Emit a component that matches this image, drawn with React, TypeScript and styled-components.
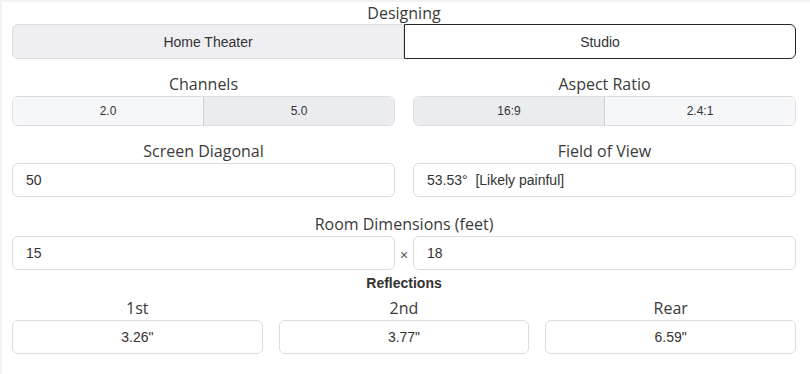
import React from "react";
import styled, { createGlobalStyle } from "styled-components";

const Global = createGlobalStyle`
  html, body { margin: 0; padding: 0; background: #fff; }
  * { box-sizing: border-box; }
`;

const Page = styled.div`
  width: 810px;
  height: 374px;
  padding: 0 14px 0 10px;
  font-family: "Open Sans", "Noto Sans", sans-serif;
  color: #333;
  border-top: 2px solid #f3f3f3;
  border-left: 2px solid #f3f3f3;
`;

const Label = styled.div<{ $mt?: number; $h?: number }>`
  text-align: center;
  font-size: 16px;
  line-height: ${(p) => p.$h ?? 24}px;
  height: ${(p) => p.$h ?? 24}px;
  margin-top: ${(p) => p.$mt ?? 0}px;
  color: #3a3a3a;
  white-space: nowrap;
`;

const Bold = styled.div`
  text-align: center;
  font-family: "Liberation Sans", Arial, sans-serif;
  font-weight: bold;
  font-size: 14px;
  line-height: 16px;
  margin-top: 5px;
  color: #333;
`;

const Segmented = styled.div<{ $h: number }>`
  display: flex;
  height: ${(p) => p.$h}px;
`;

const ModeBtn = styled.div<{ $active?: boolean; $side: "l" | "r" }>`
  flex: 1;
  display: flex;
  align-items: center;
  justify-content: center;
  font-family: "Liberation Sans", Arial, sans-serif;
  font-size: 14px;
  color: #333;
  background: ${(p) => (p.$active ? "#fff" : "#efeff3")};
  border: 1px solid ${(p) => (p.$active ? "#262626" : "#d9d9de")};
  border-radius: ${(p) => (p.$side === "l" ? "6px 0 0 6px" : "0 6px 6px 0")};
`;

const Two = styled.div`
  display: grid;
  grid-template-columns: 1fr 1fr;
  column-gap: 18px;
`;

const Col = styled.div`
  display: flex;
  flex-direction: column;
`;

const Toggle = styled.div`
  display: flex;
  height: 30px;
  border: 1px solid #dcdde1;
  border-radius: 6px;
  overflow: hidden;
`;

const Seg = styled.div<{ $sel?: boolean }>`
  flex: 1;
  display: flex;
  align-items: center;
  justify-content: center;
  font-family: "Liberation Sans", Arial, sans-serif;
  font-size: 12px;
  color: #333;
  background: ${(p) => (p.$sel ? "#ebecf0" : "#f6f7f9")};
  & + & { border-left: 1px solid #cfd0d4; }
`;

const Field = styled.div<{ $center?: boolean }>`
  height: 34px;
  border: 1px solid #dcdcdf;
  border-radius: 6px;
  display: flex;
  align-items: center;
  justify-content: ${(p) => (p.$center ? "center" : "flex-start")};
  padding-left: ${(p) => (p.$center ? 0 : 13)}px;
  font-family: "Liberation Sans", Arial, sans-serif;
  font-size: 14px;
  color: #333;
  white-space: pre;
  background: #fff;
`;

const DimRow = styled.div`
  display: grid;
  grid-template-columns: 1fr 18px 1fr;
  align-items: center;
`;

const Times = styled.div`
  text-align: center;
  font-family: "Liberation Sans", Arial, sans-serif;
  font-size: 14px;
  color: #555;
  padding-top: 3px;
`;

const Three = styled.div`
  display: grid;
  grid-template-columns: 1fr 1fr 1fr;
  column-gap: 16px;
`;

export default function App() {
  return (
    <>
      <Global />
      <Page>
        <Label $h={22}>Designing</Label>
        <Segmented $h={35}>
          <ModeBtn $side="l">Home Theater</ModeBtn>
          <ModeBtn $side="r" $active>Studio</ModeBtn>
        </Segmented>
        <Two>
          <Col>
            <Label $mt={13}>Channels</Label>
            <Toggle>
              <Seg>2.0</Seg>
              <Seg $sel>5.0</Seg>
            </Toggle>
          </Col>
          <Col>
            <Label $mt={13}>Aspect Ratio</Label>
            <Toggle>
              <Seg $sel>16:9</Seg>
              <Seg>2.4:1</Seg>
            </Toggle>
          </Col>
          <Col>
            <Label $mt={13}>Screen Diagonal</Label>
            <Field>50</Field>
          </Col>
          <Col>
            <Label $mt={13}>Field of View</Label>
            <Field>{"53.53°  [Likely painful]"}</Field>
          </Col>
        </Two>
        <Label $mt={15}>Room Dimensions (feet)</Label>
        <DimRow>
          <Field>15</Field>
          <Times>×</Times>
          <Field>18</Field>
        </DimRow>
        <Bold>Reflections</Bold>
        <Three>
          <Col>
            <Label $mt={5}>1st</Label>
            <Field $center>3.26"</Field>
          </Col>
          <Col>
            <Label $mt={5}>2nd</Label>
            <Field $center>3.77"</Field>
          </Col>
          <Col>
            <Label $mt={5}>Rear</Label>
            <Field $center>6.59"</Field>
          </Col>
        </Three>
      </Page>
    </>
  );
}
